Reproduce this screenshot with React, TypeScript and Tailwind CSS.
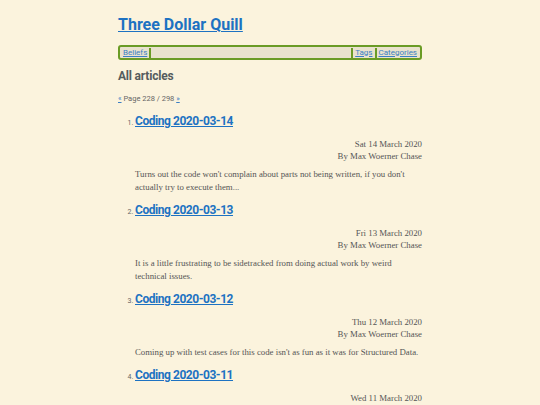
import React from 'react';

interface Article {
  title: string;
  date: string;
  summary: string;
}

const articles: Article[] = [
  {
    title: 'Coding 2020-03-14',
    date: 'Sat 14 March 2020',
    summary:
      "Turns out the code won't complain about parts not being written, if you don't actually try to execute them...",
  },
  {
    title: 'Coding 2020-03-13',
    date: 'Fri 13 March 2020',
    summary:
      'It is a little frustrating to be sidetracked from doing actual work by weird technical issues.',
  },
  {
    title: 'Coding 2020-03-12',
    date: 'Thu 12 March 2020',
    summary: "Coming up with test cases for this code isn't as fun as it was for Structured Data.",
  },
  {
    title: 'Coding 2020-03-11',
    date: 'Wed 11 March 2020',
    summary: 'More work on the test cases, and some cleanup of the helper functions.',
  },
];

const heading = { fontFamily: 'Roboto, "Open Sans", sans-serif' };
const body = { fontFamily: '"Liberation Serif", "DejaVu Serif", serif' };

export default function App() {
  return (
    <div className="min-h-screen bg-[#fbf3dd] overflow-hidden">
      <div className="w-[304px] mx-auto pt-[14px]">
        {/* Header */}
        <h1 style={heading} className="text-[16px] leading-[22px] font-bold">
          <a href="#" className="text-[#1d72c2] underline">
            Three Dollar Quill
          </a>
        </h1>

        {/* Navigation */}
        <nav
          style={heading}
          className="mt-[9px] h-[15px] flex items-center border-2 border-[#6a9b25] rounded-[3px] bg-[#e9e2cd] px-[2px] text-[8px]"
        >
          <a href="#" className="text-[#3b7fc4] underline px-[1px]">
            Beliefs
          </a>
          <span className="w-[2px] h-[10px] bg-[#6a9b25] ml-[1px]" />
          <span className="flex-1" />
          <span className="w-[2px] h-[10px] bg-[#6a9b25] mr-[1px]" />
          <a href="#" className="text-[#3b7fc4] underline px-[1px]">
            Tags
          </a>
          <span className="w-[2px] h-[10px] bg-[#6a9b25] mx-[1px]" />
          <a href="#" className="text-[#3b7fc4] underline px-[1px]">
            Categories
          </a>
        </nav>

        {/* Main Content */}
        <h2
          style={heading}
          className="mt-[8px] text-[12px] leading-[16px] font-bold tracking-[-0.2px] text-[#555c5e]"
        >
          All articles
        </h2>

        <p style={heading} className="mt-[10px] text-[7.5px] leading-[10px] text-[#666]">
          <a href="#" className="text-[#3b7fc4] underline">
            «
          </a>{' '}
          Page 228 / 298{' '}
          <a href="#" className="text-[#3b7fc4] underline">
            »
          </a>
        </p>

        <ol className="mt-[6px] pl-[17px] list-decimal">
          {articles.map((article) => (
            <li
              key={article.title}
              style={heading}
              className="marker:text-[7px] marker:text-[#666] pb-[5px]"
            >
              <a
                href="#"
                className="block text-[12px] leading-[22px] font-bold tracking-[-0.45px] text-[#1d72c2] underline"
              >
                {article.title}
              </a>
              <div style={body} className="mt-[6px] text-right text-[8.8px] leading-[12px] text-[#555]">
                <div>{article.date}</div>
                <div>By Max Woerner Chase</div>
              </div>
              <p style={body} className="mt-[6px] text-[8.8px] leading-[13px] text-[#555]">
                {article.summary}
              </p>
            </li>
          ))}
        </ol>
      </div>
    </div>
  );
}
